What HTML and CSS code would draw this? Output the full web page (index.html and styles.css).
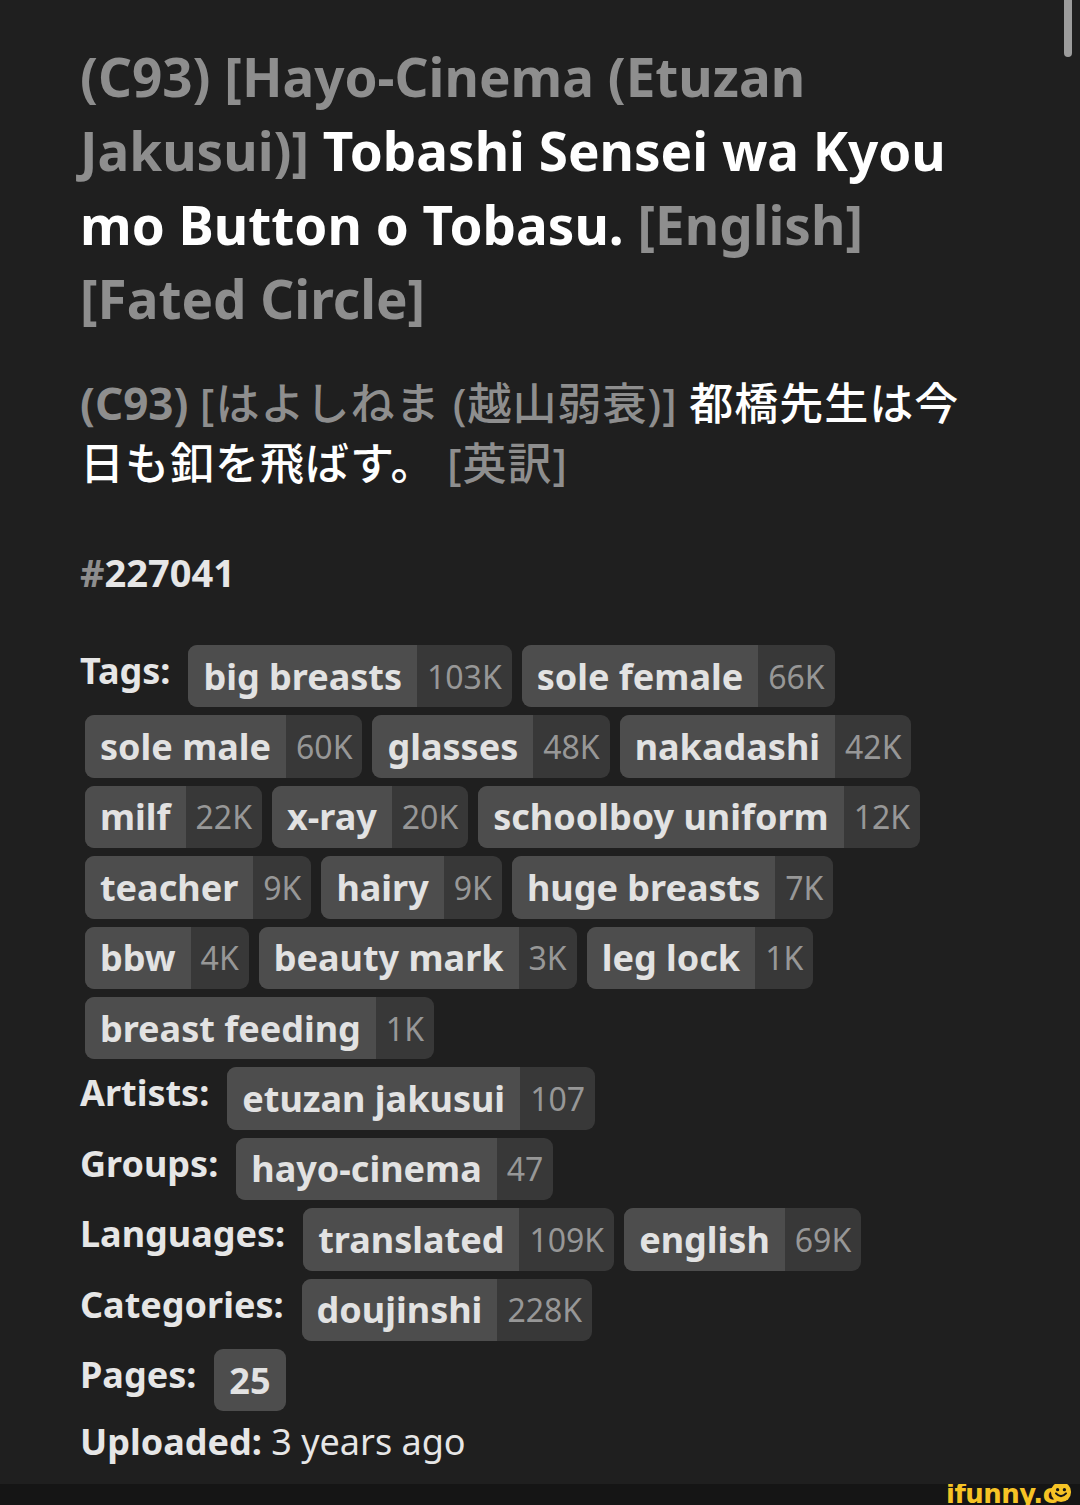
FILE: index.html
```html
<!DOCTYPE html>
<html lang="en">
<head>
<meta charset="utf-8">
<title>227041</title>
<link rel="stylesheet" href="styles.css">
</head>
<body>
<div class="page">
  <h1 class="title"><span class="muted">(C93) [Hayo-Cinema (Etuzan Jakusui)]</span> <span class="pretty">Tobashi Sensei wa Kyou mo Button o Tobasu.</span> <span class="muted">[English] [Fated Circle]</span></h1>
  <h2 class="title-jp"><span class="muted">(C93) <span class="cjk">[はよしねま (越山弱衰)]</span></span> <span class="pretty cjk">都橋先生は今日も釦を飛ばす。</span> <span class="muted cjk">[英訳]</span></h2>
  <h3 class="gid"><span class="hash">#</span>227041</h3>

  <section class="info">
    <div class="field">
      <span class="label">Tags:</span>
      <a class="tag"><span class="name">big breasts</span><span class="count">103K</span></a>
      <a class="tag"><span class="name">sole female</span><span class="count">66K</span></a>
      <a class="tag"><span class="name">sole male</span><span class="count">60K</span></a>
      <a class="tag"><span class="name">glasses</span><span class="count">48K</span></a>
      <a class="tag"><span class="name">nakadashi</span><span class="count">42K</span></a>
      <a class="tag"><span class="name">milf</span><span class="count">22K</span></a>
      <a class="tag"><span class="name">x-ray</span><span class="count">20K</span></a>
      <a class="tag"><span class="name">schoolboy uniform</span><span class="count">12K</span></a>
      <a class="tag"><span class="name">teacher</span><span class="count">9K</span></a>
      <a class="tag"><span class="name">hairy</span><span class="count">9K</span></a>
      <a class="tag"><span class="name">huge breasts</span><span class="count">7K</span></a>
      <a class="tag"><span class="name">bbw</span><span class="count">4K</span></a>
      <a class="tag"><span class="name">beauty mark</span><span class="count">3K</span></a>
      <a class="tag"><span class="name">leg lock</span><span class="count">1K</span></a>
      <a class="tag"><span class="name">breast feeding</span><span class="count">1K</span></a>
    </div>
    <div class="field">
      <span class="label">Artists:</span>
      <a class="tag"><span class="name">etuzan jakusui</span><span class="count">107</span></a>
    </div>
    <div class="field">
      <span class="label">Groups:</span>
      <a class="tag"><span class="name">hayo-cinema</span><span class="count">47</span></a>
    </div>
    <div class="field">
      <span class="label">Languages:</span>
      <a class="tag"><span class="name">translated</span><span class="count">109K</span></a>
      <a class="tag"><span class="name">english</span><span class="count">69K</span></a>
    </div>
    <div class="field">
      <span class="label">Categories:</span>
      <a class="tag"><span class="name">doujinshi</span><span class="count">228K</span></a>
    </div>
    <div class="field">
      <span class="label">Pages:</span>
      <a class="tag"><span class="name">25</span></a>
    </div>
    <div class="uploaded"><b>Uploaded:</b> 3 years ago</div>
  </section>
</div>

<div class="scrollbar"></div>
<div class="watermark"><span class="wm-text">ifunny.c</span><svg class="wm-smile" viewBox="0 0 24 24" width="22" height="22"><circle cx="12" cy="12" r="11" fill="#f6c325"/><circle cx="8.3" cy="9.5" r="1.8" fill="#161616"/><circle cx="15.7" cy="9.5" r="1.8" fill="#161616"/><path d="M6.5 13.5 Q12 19.5 17.5 13.5" stroke="#161616" stroke-width="2.2" fill="none" stroke-linecap="round"/></svg></div>
</body>
</html>
```
FILE: styles.css
```css
html, body {
  margin: 0;
  padding: 0;
  background: #1f1f1f;
  height: 1505px;
  overflow: hidden;
}
body {
  font-family: "Noto Sans", "Open Sans", "Noto Sans CJK JP", sans-serif;
  color: #e6e6e6;
  position: relative;
}
.page {
  padding: 0 100px 0 80px;
}
.title {
  margin: 40px 0 0;
  font-size: 53px;
  line-height: 74px;
  font-weight: 700;
  color: #fff;
}
.muted {
  color: #8e8e8e;
}
.pretty {
  color: #fff;
}
.title-jp {
  margin: 37px 0 0;
  font-size: 44px;
  line-height: 60px;
  font-weight: 700;
}
.cjk {
  font-family: "Noto Sans", "Noto Sans CJK JP", sans-serif;
  font-weight: 500;
  letter-spacing: 1px;
}
.gid {
  margin: 54px 0 0;
  font-size: 38px;
  line-height: 50px;
  font-weight: 700;
  color: #e6e6e6;
}
.hash {
  color: #8e8e8e;
}
.info {
  margin-top: 44px;
}
.field {
  display: flex;
  flex-wrap: wrap;
  align-items: flex-start;
}
.label {
  font-size: 36px;
  line-height: 52px;
  font-weight: 700;
  margin: 4px 13px 4px 0;
  color: #e6e6e6;
}
.tag {
  display: flex;
  height: 62.4px;
  margin: 4px 5px;
  border-radius: 9px;
  overflow: hidden;
  background: #383838;
}
.name {
  display: flex;
  align-items: center;
  padding: 0 15px;
  background: #4d4d4d;
  color: #e2e2e2;
  font-size: 36px;
  font-weight: 700;
}
.count {
  display: flex;
  align-items: center;
  padding: 0 10px;
  color: #979797;
  font-size: 32px;
  font-weight: 400;
}
.uploaded {
  font-size: 36px;
  line-height: 54px;
  color: #e6e6e6;
}
.uploaded b {
  font-weight: 700;
}
.scrollbar {
  position: absolute;
  top: -8px;
  left: 1064px;
  width: 8px;
  height: 65px;
  border-radius: 4px;
  background: #9c9c9c;
}
.watermark {
  position: absolute;
  left: 0;
  right: 0;
  bottom: 0;
  height: 21px;
  background: #151515;
  overflow: hidden;
}
.wm-text {
  position: absolute;
  left: 946px;
  top: -5px;
  font-family: "DejaVu Sans", sans-serif;
  font-weight: 700;
  font-size: 26px;
  line-height: 30px;
  color: #f6c325;
  letter-spacing: -0.5px;
}
.wm-smile {
  position: absolute;
  left: 1050px;
  top: -3px;
}
```
